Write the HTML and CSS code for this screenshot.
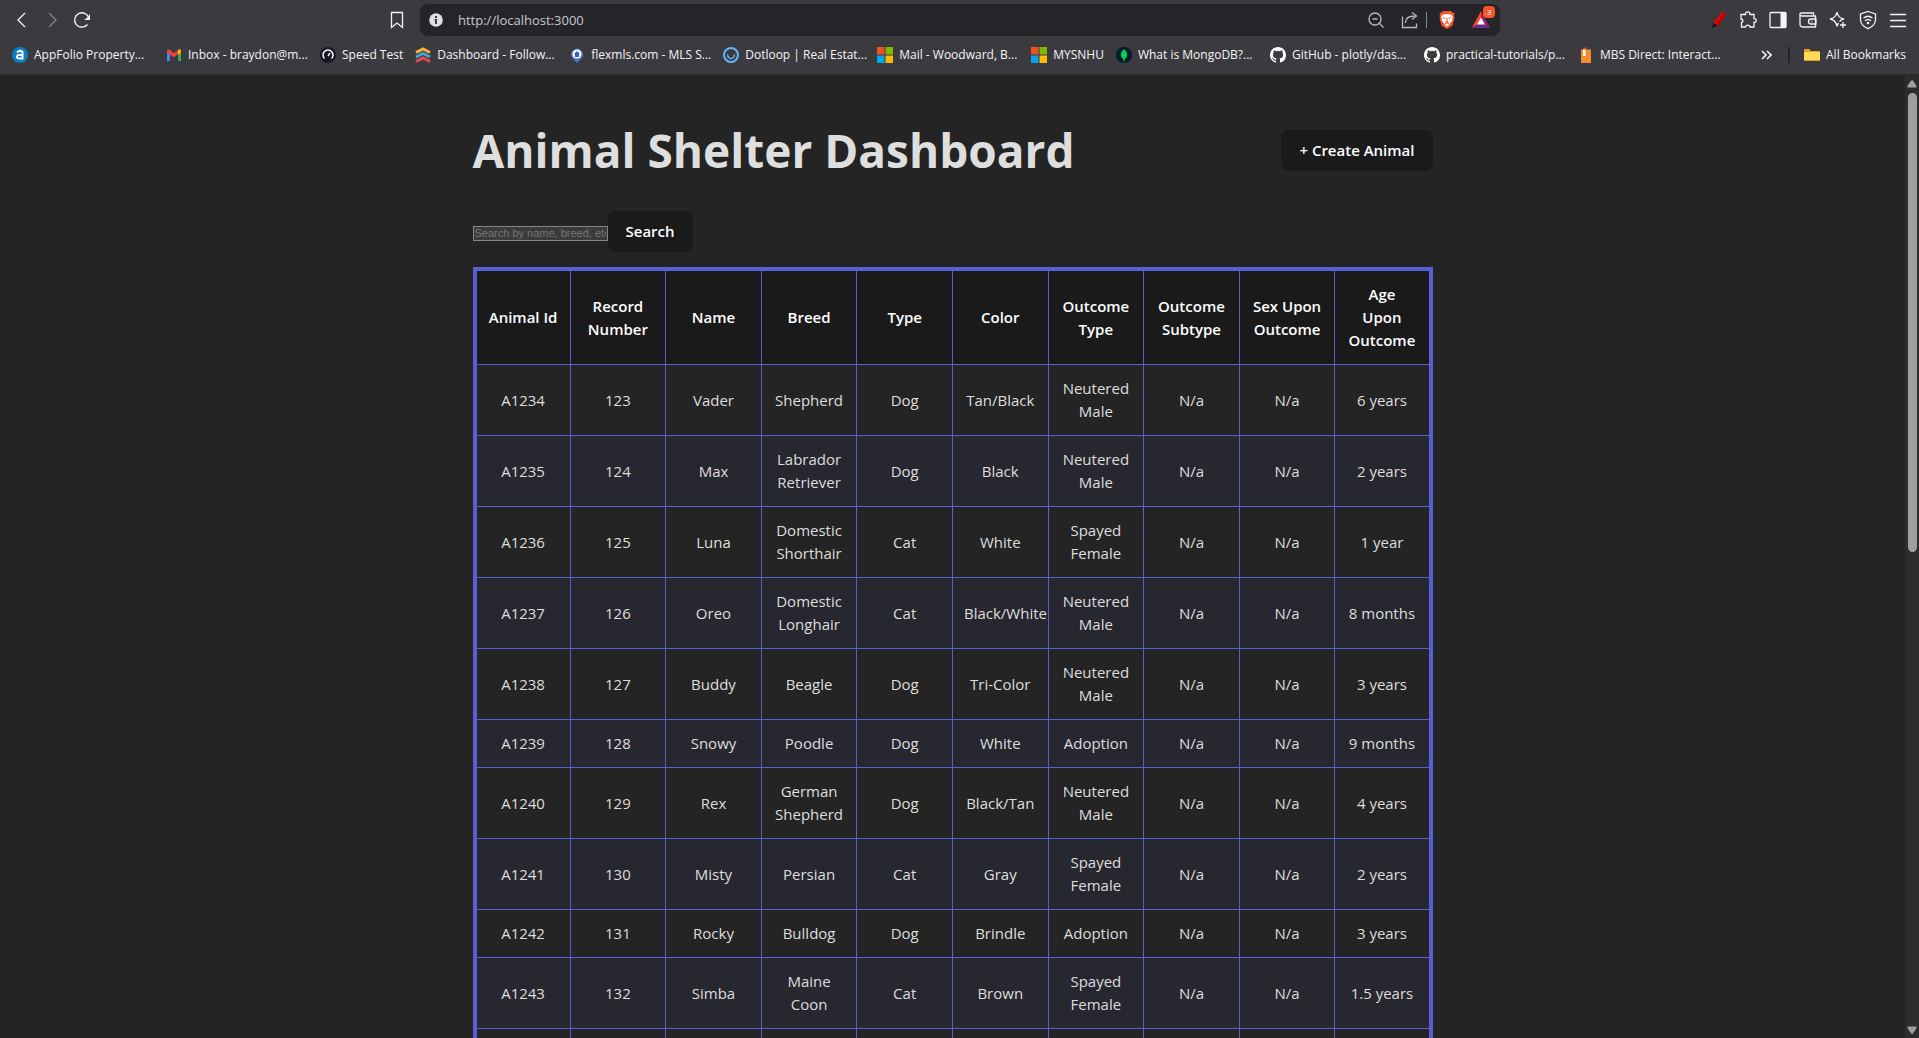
FILE: index.html
```html
<!DOCTYPE html>
<html lang="en">
<head>
<meta charset="utf-8">
<title>Animal Shelter Dashboard</title>
<link rel="stylesheet" href="styles.css">
</head>
<body>
<header class="browser">
  <div class="toolbar">
    <div class="nav">
      <button class="tool" aria-label="Back"><svg width="20" height="20" viewBox="0 0 20 20"><path d="M13 3 6 10l7 7" class="line"/></svg></button>
      <button class="tool dim" aria-label="Forward"><svg width="20" height="20" viewBox="0 0 20 20"><path d="m7 3 7 7-7 7" class="line"/></svg></button>
      <button class="tool" aria-label="Reload"><svg width="20" height="20" viewBox="0 0 20 20"><path d="M15.500 14.500A7.200 7.200 0 1 1 17 9" class="line"/><path d="M18 4v6h-6c2-1 4-3 6-6z" fill="currentColor"/></svg></button>
    </div>
    <button class="tool" aria-label="Bookmark this page"><svg width="20" height="20" viewBox="0 0 20 20"><path d="M4.500 2.500h11v15L10 13l-5.500 4.500z" class="line"/></svg></button>
    <div class="address">
      <svg width="14" height="14" viewBox="0 0 14 14"><circle cx="7" cy="7" r="6.800" fill="#dfdfe4"/><path d="M6 3h2v2H6zM5.500 6H8v5H6V7h-.5z" fill="#3a393e"/></svg>
      <input class="url" type="text" aria-label="Address" value="http://localhost:3000">
      <button class="tool soft" aria-label="Zoom"><svg width="20" height="20" viewBox="0 0 20 20"><circle cx="9" cy="9" r="6" class="line"/><path d="m13.500 13.500 4 4M6.500 9h5" class="line"/></svg></button>
      <button class="tool soft" aria-label="Share"><svg width="20" height="20" viewBox="0 0 20 20"><path d="M2.500 6.500v11h14v-4M5.500 13c0-5 3-7 9-7M12 2.500 16.500 6 12 9.500" class="line"/></svg></button>
      <span class="bar"></span>
      <button class="tool" aria-label="Brave Shields"><svg width="20" height="20" viewBox="0 0 20 20"><path d="M6 1h8l1.500 1.500L17.500 3l-.5 3 .5 2-2 7.500L10 19l-5.500-3.500L2.500 8 3 6l-.5-3 2-.5z" fill="#fb542b"/><path d="M6 4.500 10 4l4 .5L16 7l-1 2 .5 1.500L13 13l-1 2-2 1.500L8 15l-1-2-2.500-2.500L5 9 4 7z" fill="#fff"/><path d="m6 7.500 2.500 1M14 7.500l-2.500 1M10 8v3l-1.500 1.200h3L10 11M8 14l2-1 2 1" stroke="#fb542b" fill="none"/></svg></button>
      <button class="tool rewards" aria-label="Brave Rewards"><svg width="20" height="20" viewBox="0 0 20 20"><path d="M10 1 .8 18 10 12z" fill="#ff4724"/><path d="m10 1 9.200 17L10 12z" fill="#9e1f63"/><path d="M.8 18h18.400L10 12z" fill="#662d91"/><path d="m10 7.500-4 7h8z" fill="#fff"/></svg><span class="count">3</span></button>
    </div>
    <div class="extensions">
      <button class="tool" aria-label="Pen"><svg width="20" height="20" viewBox="0 0 20 20"><path d="M13 3.500 16.500 2l1 2.500L10 16l-4.500-3z" fill="#f40000"/><path d="m16.500 2 1 2.500L10 16l-2-1.500z" fill="#b80000"/><path d="M5.500 13 9 15.500 4 18z" fill="#111"/></svg></button>
      <button class="tool" aria-label="Extensions"><svg width="20" height="20" viewBox="0 0 20 20"><path d="M3 4.500h4.500C7 1 12 1 12 4.500h4v4.200c3-.7 3 4.300 0 3.600V17h-4c-.5-2.500-4-2.500-4.500 0H3.500v-4.500c2-.5 2-3-.5-3.500z" class="line"/></svg></button>
      <button class="tool" aria-label="Side panel"><svg width="20" height="20" viewBox="0 0 20 20"><rect x="2" y="2.500" width="16" height="15" rx="1" class="line"/><path d="M12.500 3H18v14h-5.500z" fill="currentColor"/></svg></button>
      <button class="tool" aria-label="Wallet"><svg width="20" height="20" viewBox="0 0 20 20"><path d="M15.500 5.500V3h-12C1 3 1.500 6 4 6h13.500v11h-13Q2 17 2 14.500V5M18 9h-5a2.500 2.500 0 0 0 0 5h5z" class="line"/><path d="M13.500 11.500h1" class="line"/></svg></button>
      <button class="tool" aria-label="Leo AI"><svg width="20" height="20" viewBox="0 0 20 20"><path d="M9 2q1 6 7 7-3 .5-4.500 2.500M9 2q-1 6-7 7 6 1 7 7.500.3-2 1.500-3.500M15 12v6M12 15h6" class="line"/></svg></button>
      <button class="tool" aria-label="VPN"><svg width="20" height="20" viewBox="0 0 20 20"><path d="M10 1.500 17.500 4v6.500Q16.500 16 10 18.700 3.500 16 2.500 10.500V4zM5.500 8q4.500-3.500 9 0M7 10.700q3-2.200 6 0" class="line"/><circle cx="10" cy="13" r="1.300" fill="currentColor"/></svg></button>
      <button class="tool" aria-label="Menu"><svg width="20" height="20" viewBox="0 0 20 20"><path d="M2 4.500h16M2 10.500h16M2 16.500h16" class="line"/></svg></button>
    </div>
  </div>
  <nav class="bookmarks" aria-label="Bookmarks">
    <a class="mark long" href="#"><svg width="16" height="16" viewBox="0 0 16 16"><circle cx="8" cy="8" r="8" fill="#0a7fc6"/><path d="M5 5.500Q8 2.500 10.500 5v6.500H7Q4.500 11.300 5 9.500T7 8h3.500" fill="none" stroke="#fff" stroke-width="2"/></svg><span>AppFolio Property...</span></a>
    <a class="mark long" href="#"><svg width="16" height="16" viewBox="0 0 16 16"><path d="M1 3.500h3V14H1z" fill="#4285f4"/><path d="M12 3.500h3V14h-3z" fill="#34a853"/><path d="M1 3.500Q2 1.500 4 3l4 3.300L12 3v4L8 10.500 1 5.500z" fill="#ea4335"/><path d="M12 3q2-1.500 3 .5v2L12 8z" fill="#fbbc04"/></svg><span>Inbox - braydon@m...</span></a>
    <a class="mark" href="#"><svg width="16" height="16" viewBox="0 0 16 16"><circle cx="8" cy="8" r="8" fill="#141526"/><path d="M4.500 11.500a5 5 0 1 1 7 0M8 9l2-3" fill="none" stroke="#fff" stroke-width="1.500"/></svg><span>Speed Test</span></a>
    <a class="mark long" href="#"><svg width="16" height="16" viewBox="0 0 16 16" fill="none" stroke-width="3"><path d="M1 5.500 8 2l7 3.500" stroke="#f8b13d"/><path d="M1 10 8 6.500l7 3.500" stroke="#3da8d0"/><path d="M1 14.500 8 11l7 3.500" stroke="#e94750"/></svg><span>Dashboard - Follow...</span></a>
    <a class="mark long" href="#"><svg width="16" height="16" viewBox="0 0 16 16"><path d="M8 16 3 11a6 6 0 1 1 10 0z" fill="#4672ca"/><circle cx="8" cy="7" r="4.600" fill="#fff"/><path d="m8 4 3 3h-1v3H6V7H5z" fill="#315eb8"/></svg><span>flexmls.com - MLS S...</span></a>
    <a class="mark long" href="#"><svg width="16" height="16" viewBox="0 0 16 16" fill="none" stroke="#62b5fa"><circle cx="8" cy="8" r="7" stroke-width="2"/><path d="M4.500 7.500q.5 4 3.500 4t3.500-4" stroke-width="1.500"/></svg><span>Dotloop | Real Estat...</span></a>
    <a class="mark long" href="#"><svg width="16" height="16" viewBox="0 0 16 16"><path d="M0 0h7.500v7.500H0z" fill="#f25022"/><path d="M8.500 0H16v7.500H8.500z" fill="#7fba00"/><path d="M0 8.500h7.500V16H0z" fill="#00a4ef"/><path d="M8.500 8.500H16V16H8.500z" fill="#ffb900"/></svg><span>Mail - Woodward, B...</span></a>
    <a class="mark" href="#"><svg width="16" height="16" viewBox="0 0 16 16"><path d="M0 0h7.500v7.500H0z" fill="#f25022"/><path d="M8.500 0H16v7.500H8.500z" fill="#7fba00"/><path d="M0 8.500h7.500V16H0z" fill="#00a4ef"/><path d="M8.500 8.500H16V16H8.500z" fill="#ffb900"/></svg><span>MYSNHU</span></a>
    <a class="mark long" href="#"><svg width="16" height="16" viewBox="0 0 16 16"><circle cx="8" cy="8" r="8" fill="#001e2b"/><path d="M8 2q6 6 .5 10.500v2h-1v-2Q2 8 8 2z" fill="#00d35a"/></svg><span>What is MongoDB?...</span></a>
    <a class="mark long" href="#"><svg width="16" height="16" viewBox="0 0 16 16"><path fill="#fff" d="M8 0C3.580 0 0 3.580 0 8c0 3.540 2.290 6.530 5.470 7.590.4.070.55-.17.55-.38v-1.490c-2.010.37-2.530-.49-2.690-.94-.09-.23-.48-.94-.82-1.130-.28-.15-.68-.52-.01-.53.63-.01 1.080.58 1.230.82.72 1.210 1.870.87 2.330.66.07-.52.28-.87.51-1.070-1.780-.2-3.640-.89-3.640-3.950 0-.87.31-1.590.82-2.150-.08-.2-.36-1.020.08-2.120 0 0 .67-.21 2.200.82a7.500 7.500 0 0 1 4 0c1.530-1.040 2.200-.82 2.200-.82.44 1.100.16 1.920.08 2.120.51.56.82 1.270.82 2.150 0 3.070-1.870 3.750-3.650 3.950.29.25.54.73.54 1.480v2.200c0 .21.15.46.55.38A8 8 0 0 0 16 8c0-4.420-3.580-8-8-8z"/></svg><span>GitHub - plotly/das...</span></a>
    <a class="mark long" href="#"><svg width="16" height="16" viewBox="0 0 16 16"><path fill="#fff" d="M8 0C3.580 0 0 3.580 0 8c0 3.540 2.290 6.530 5.470 7.590.4.070.55-.17.55-.38v-1.490c-2.010.37-2.530-.49-2.690-.94-.09-.23-.48-.94-.82-1.130-.28-.15-.68-.52-.01-.53.63-.01 1.080.58 1.230.82.72 1.210 1.870.87 2.330.66.07-.52.28-.87.51-1.070-1.780-.2-3.640-.89-3.640-3.950 0-.87.31-1.590.82-2.150-.08-.2-.36-1.020.08-2.120 0 0 .67-.21 2.200.82a7.500 7.500 0 0 1 4 0c1.530-1.040 2.200-.82 2.200-.82.44 1.100.16 1.920.08 2.120.51.56.82 1.270.82 2.150 0 3.070-1.870 3.750-3.650 3.950.29.25.54.73.54 1.480v2.200c0 .21.15.46.55.38A8 8 0 0 0 16 8c0-4.420-3.580-8-8-8z"/></svg><span>practical-tutorials/p...</span></a>
    <a class="mark long" href="#"><svg width="16" height="16" viewBox="0 0 16 16"><path d="M3 2.500 9 0v2.500z" fill="#d94f20"/><path d="M3 2.500h10V16H3z" fill="#f68a2c"/><path d="M5 2.500h2.500V9H5z" fill="#fff"/></svg><span>MBS Direct: Interact...</span></a>
    <button class="more" aria-label="More bookmarks"><svg width="12" height="12" viewBox="0 0 12 12"><path d="m2 2 4 4-4 4M7 2l4 4-4 4" class="line thick"/></svg></button>
    <span class="bar dark"></span>
    <a class="mark" href="#"><svg width="16" height="16" viewBox="0 0 16 16"><path d="M0 3q0-1 1-1h4l2 2h8q1 0 1 1v8q0 1-1 1H1q-1 0-1-1z" fill="#dfa520"/><path d="M1 5h14q1 0 1 1v7H0V6q0-1 1-1z" fill="#ffd95a"/></svg><span>All Bookmarks</span></a>
  </nav>
</header>
<div class="viewport">
  <main class="page">
    <div class="content">
      <div class="heading">
        <h1>Animal Shelter Dashboard</h1>
        <button class="btn">+ Create Animal</button>
      </div>
      <form class="search">
        <input class="query" type="text" aria-label="Search animals" placeholder="Search by name, breed, etc.">
        <button class="btn" type="button">Search</button>
      </form>
      <table class="animals">
        <thead>
          <tr><th>Animal Id</th><th>Record Number</th><th>Name</th><th>Breed</th><th>Type</th><th>Color</th><th>Outcome Type</th><th>Outcome Subtype</th><th>Sex Upon Outcome</th><th>Age<br>Upon Outcome</th></tr>
        </thead>
        <tbody>
          <tr><td>A1234</td><td>123</td><td>Vader</td><td>Shepherd</td><td>Dog</td><td>Tan/Black</td><td>Neutered Male</td><td>N/a</td><td>N/a</td><td>6 years</td></tr>
          <tr><td>A1235</td><td>124</td><td>Max</td><td>Labrador Retriever</td><td>Dog</td><td>Black</td><td>Neutered Male</td><td>N/a</td><td>N/a</td><td>2 years</td></tr>
          <tr><td>A1236</td><td>125</td><td>Luna</td><td>Domestic Shorthair</td><td>Cat</td><td>White</td><td>Spayed Female</td><td>N/a</td><td>N/a</td><td>1 year</td></tr>
          <tr><td>A1237</td><td>126</td><td>Oreo</td><td>Domestic Longhair</td><td>Cat</td><td>Black/White</td><td>Neutered Male</td><td>N/a</td><td>N/a</td><td>8 months</td></tr>
          <tr><td>A1238</td><td>127</td><td>Buddy</td><td>Beagle</td><td>Dog</td><td>Tri-Color</td><td>Neutered Male</td><td>N/a</td><td>N/a</td><td>3 years</td></tr>
          <tr><td>A1239</td><td>128</td><td>Snowy</td><td>Poodle</td><td>Dog</td><td>White</td><td>Adoption</td><td>N/a</td><td>N/a</td><td>9 months</td></tr>
          <tr><td>A1240</td><td>129</td><td>Rex</td><td>German Shepherd</td><td>Dog</td><td>Black/Tan</td><td>Neutered Male</td><td>N/a</td><td>N/a</td><td>4 years</td></tr>
          <tr><td>A1241</td><td>130</td><td>Misty</td><td>Persian</td><td>Cat</td><td>Gray</td><td>Spayed Female</td><td>N/a</td><td>N/a</td><td>2 years</td></tr>
          <tr><td>A1242</td><td>131</td><td>Rocky</td><td>Bulldog</td><td>Dog</td><td>Brindle</td><td>Adoption</td><td>N/a</td><td>N/a</td><td>3 years</td></tr>
          <tr><td>A1243</td><td>132</td><td>Simba</td><td>Maine Coon</td><td>Cat</td><td>Brown</td><td>Spayed Female</td><td>N/a</td><td>N/a</td><td>1.5 years</td></tr>
          <tr><td></td><td></td><td></td><td></td><td></td><td></td><td></td><td></td><td></td><td></td></tr>
        </tbody>
      </table>
    </div>
  </main>
  <div class="scrollbar" aria-hidden="true">
    <svg width="10" height="8" viewBox="0 0 10 8"><path d="M5 0q1 0 4.500 6 .5 1-.5 1.500H1Q0 7 .5 6 4 0 5 0z" fill="#9f9f9f"/></svg>
    <div class="track"><div class="thumb"></div><div class="rest"></div></div>
    <svg width="10" height="8" viewBox="0 0 10 8"><path d="M5 8q1 0 4.500-6Q10 1 9 .5H1Q0 1 .5 2 4 8 5 8z" fill="#9f9f9f"/></svg>
  </div>
</div>
</body>
</html>
```
FILE: styles.css
```css
* { box-sizing: border-box; }

body {
  margin: 0;
  height: 100vh;
  display: flex;
  flex-direction: column;
  overflow: hidden;
  background: #242424;
  color: #dedede;
  font: 15px/23px "Open Sans", sans-serif;
}

button { font: inherit; color: inherit; border: 0; padding: 0; background: none; }

svg { flex: none; display: block; }
.line { fill: none; stroke: currentColor; stroke-width: 1.3; }
.thick { stroke-width: 1.6; }

/* Browser chrome */
.browser {
  flex: none;
  background: #3b3a3f;
  color: #f4f4f6;
  border-bottom: 1px solid #2d2c30;
}

.toolbar {
  display: grid;
  grid-template-columns: 375fr auto minmax(0, 1080px) 408fr;
  align-items: center;
  padding: 4px 11px 3px 12px;
}
.nav, .extensions { display: flex; gap: 10px; }
.extensions { justify-content: flex-end; }
.toolbar > .tool { margin-right: 13px; }
.tool { display: block; width: 20px; height: 20px; flex: none; }
.dim { color: #838287; }
.soft { color: #b9b8bd; }

.address {
  display: flex;
  align-items: center;
  height: 32px;
  padding: 0 9px;
  border-radius: 8px;
  background: #252429;
}
.url {
  flex: 1;
  min-width: 0;
  margin-left: 15px;
  padding: 0;
  border: 0;
  background: none;
  color: #c9c8ce;
  font: 13px/20px "Open Sans", sans-serif;
}
.address .soft { margin-right: 14px; }
.bar { width: 1px; height: 16px; margin: 0 10px 0 -8px; background: #8a898e; }
.bar.dark { width: 2px; margin: 0 14px 0 16px; background: #242428; }
.rewards { position: relative; margin-left: 14px; }
.count {
  position: absolute;
  top: -4px;
  right: -4px;
  width: 12px;
  height: 12px;
  border-radius: 4px;
  background: #fb542b;
  color: #fff;
  font-size: 8px;
  line-height: 12px;
  text-align: center;
}

.bookmarks {
  display: flex;
  align-items: center;
  height: 35px;
  padding: 0 13px 4px 12px;
  font-size: 12px;
  line-height: 18px;
}
.mark {
  display: flex;
  align-items: center;
  gap: 6px;
  margin-right: 12px;
  color: inherit;
  text-decoration: none;
  white-space: nowrap;
}
.mark:last-child { margin-right: 0; }
.mark.long { width: 142px; }
.more { margin-left: auto; }

/* Page */
.viewport { flex: 1; min-height: 0; display: flex; }
.page { flex: 1; overflow: hidden; }
.content { max-width: 960px; margin: 0 auto; padding-top: 38px; }

.heading {
  display: flex;
  justify-content: space-between;
  align-items: center;
  margin-bottom: 23px;
}
h1 { margin: 0; font-size: 46px; line-height: 75px; }

.btn {
  padding: 9px 18px;
  border-radius: 8px;
  background: #1a1a1a;
  color: #fff;
  font-weight: 600;
}

.search { display: flex; align-items: baseline; margin-bottom: 15px; }
.query {
  width: 135px;
  height: 15px;
  padding: 0 1px;
  border: 1px solid #858585;
  background: #3b3b3b;
  color: #fff;
  font: 11px/13px "Liberation Sans", sans-serif;
}
.query::placeholder { color: #757575; }

.animals {
  width: 100%;
  table-layout: fixed;
  border-collapse: collapse;
  border: 4px solid #575fd5;
  text-align: center;
}
.animals th, .animals td { padding: 12px 11px; border: 1px solid #575fd5; }
.animals thead { background: #1a1a1a; color: #fff; }
.animals th { border-top-width: 4px; font-weight: 600; }
.animals tbody tr:nth-child(even) { background: #27272f; }

.scrollbar {
  flex: none;
  width: 14px;
  display: flex;
  flex-direction: column;
  align-items: center;
  gap: 5px;
  padding: 5px 0 4px;
  background: #2c2c2c;
}
.track { flex: 1; display: flex; flex-direction: column; }
.thumb { flex: 50; width: 9px; border-radius: 5px; background: #9f9f9f; }
.rest { flex: 51; }
```
